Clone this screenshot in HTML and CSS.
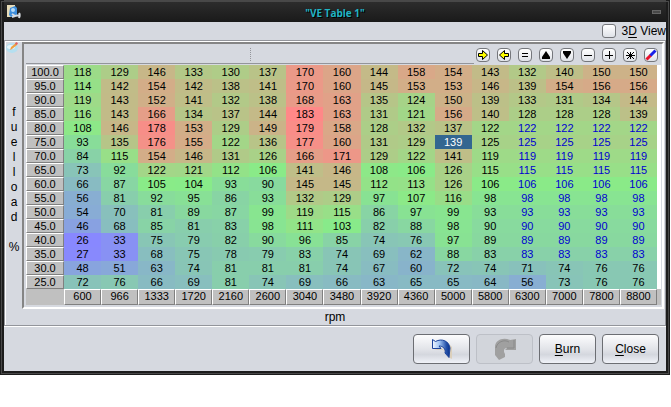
FILE: index.html
```
<!DOCTYPE html>
<html lang="en">
<head>
    <meta charset="UTF-8">
    <meta name="viewport" content="width=device-width, initial-scale=1.0">
    <title>VE Table 1</title>
    <link rel="stylesheet" href="styles.css">
</head>
<body>
    <div class="window">
        <header class="titlebar">
            <svg class="app-icon" width="16" height="16" viewBox="0 0 16 16">
                <path d="M1 1h8v10l-2 2H1z" fill="#e8dcb8"/>
                <path d="M4 4l5-2 2 2v8l-6 1-2-2z" fill="#3f8fdc"/>
                <circle cx="7" cy="6" r="2" fill="#b8dcf8"/>
                <path d="M6 10l3 2 5-1M13 9l1 2M13 14l1-3M6 13l3-1" stroke="#d8dde2" stroke-width="2" fill="none"/>
            </svg>
            <h1 class="title">"VE Table 1"</h1>
            <button class="minimize" aria-label="Minimize"></button>
        </header>

        <div class="options">
            <input type="checkbox" id="view3d">
            <label for="view3d">3<u>D</u> View</label>
        </div>

        <main class="panel">
            <div class="side">
                <svg width="13" height="12" viewBox="0 0 13 12">
                    <ellipse cx="6" cy="6" rx="6" ry="5" fill="#b5dff0"/>
                    <ellipse cx="5" cy="5" rx="4" ry="2" fill="#e6f5fb"/>
                    <path d="M4 8l1-3 5-4 1 2-5 4z" fill="#f0a040"/>
                    <path d="M10 0l2 1-1 2-2-1z" fill="#e06060"/>
                </svg>
                <div class="y-label">
                    <span>f</span>
                    <span>u</span>
                    <span>e</span>
                    <span>l</span>
                    <span>l</span>
                    <span>o</span>
                    <span>a</span>
                    <span>d</span>
                    <span></span>
                    <span>%</span>
                </div>
            </div>
            <div class="frame">
                <div class="toolbar">
                    <div class="status"><span></span><span></span></div>
                    <div class="tools">
                        <button aria-label="Shift right"><svg viewBox="0 0 14 14"><path d="M2.500 5.500h4v-3l5 4.500-5 4.500v-3h-4z" fill="#ff0" stroke="#000"/></svg></button>
                        <button aria-label="Shift left"><svg viewBox="0 0 14 14"><path d="M11.500 5.500h-4v-3l-5 4.500 5 4.500v-3h4z" fill="#ff0" stroke="#000"/></svg></button>
                        <button aria-label="Set value"><svg viewBox="0 0 14 14"><path d="M4 5.500h6M4 8.500h6" stroke="#000"/></svg></button>
                        <button aria-label="Increase"><svg viewBox="0 0 14 14"><path d="M7 3l4 6v2H3V9z"/></svg></button>
                        <button aria-label="Decrease"><svg viewBox="0 0 14 14"><path d="M3 3h8v2l-4 6-4-6z"/></svg></button>
                        <button aria-label="Subtract"><svg viewBox="0 0 14 14"><path d="M3 7.500h8" stroke="#000"/></svg></button>
                        <button aria-label="Add"><svg viewBox="0 0 14 14"><path d="M3 7.500h8M7.500 3v8" stroke="#000"/></svg></button>
                        <button aria-label="Multiply"><svg viewBox="0 0 14 14"><path d="M3 7.500h9M4 4l7 7M11 4l-7 7M7.500 4v7" stroke="#000"/></svg></button>
                        <button aria-label="Color cells"><svg viewBox="0 0 14 14"><path d="M2.500 11.500L7 7" stroke="#e8102c" stroke-width="3"/><path d="M6.500 7.500L11.500 2.500" stroke="#1820e8" stroke-width="3"/></svg></button>
                    </div>
                </div>
                <table id="ve-table">
                    <colgroup>
                        <col class="col-load">
                        <col span="16">
                        <col class="col-end">
                    </colgroup>
                    <tbody></tbody>
                    <tfoot></tfoot>
                </table>
            </div>
            <div class="x-label">rpm</div>
        </main>

        <footer class="actions">
            <button aria-label="Undo">
                <svg width="22" height="22" viewBox="0 0 22 22">
                    <defs>
                        <linearGradient id="blue">
                            <stop offset="0" stop-color="#f0f6ff"/>
                            <stop offset="0.4" stop-color="#a0c4f4"/>
                            <stop offset="0.8" stop-color="#2450a8"/>
                            <stop offset="1" stop-color="#083088"/>
                        </linearGradient>
                    </defs>
                    <path d="M3 12h9l4 3 1 4 4 2V9l-3-3-2 8-6-4z" fill="#dcd0bc"/>
                    <path d="M1.500 1.500l3 2C11 0 18 3 19 10l-1 9.500-4-4.500c1-4-2-7-6-7l2 2.500H1.500z" fill="url(#blue)" stroke="#1c449c"/>
                </svg>
            </button>
            <button aria-label="Redo" disabled>
                <svg width="22" height="22" viewBox="0 0 22 22">
                    <path d="M22 1v11H11l2-2c-3 0-4 3-2 6v3l-6 3-4-5V9C1 2 9-1 16 2z" fill="#a0a0a0"/>
                    <path d="M20 2v8h-7M2 10c1-6 8-9 13-6" stroke="#8a8a8a" fill="none"/>
                </svg>
            </button>
            <button><span><u>B</u>urn</span></button>
            <button><span><u>C</u>lose</span></button>
        </footer>
    </div>

    <script src="table.js"></script>
</body>
</html>
```
FILE: styles.css
```
body {
    margin: 0;
    background: #fff;
    font-family: "Liberation Sans", Arial, sans-serif;
    font-size: 12px;
    color: #000;
}

button {
    font-family: inherit;
    font-size: 12px;
    color: #000;
    padding: 0;
}

.window {
    box-sizing: border-box;
    margin-right: 1px;
    border: 4px solid #1c1c1c;
    border-top: 0;
    outline: 1px solid #484848;
    outline-offset: -2px;
    background: #d6d9e0;
}

.titlebar {
    display: grid;
    grid-template-columns: 20px 1fr 20px;
    align-items: center;
    height: 22px;
    background: linear-gradient(#484848 0, #484848 1px, #2c2c2c 2px, #1a1a1a);
}

.app-icon {
    margin: 2px 0 0 2px;
}

.title {
    margin: 3px 0 0;
    text-align: center;
    font-family: "Open Sans", "Noto Sans", sans-serif;
    font-size: 10px;
    font-weight: bold;
    line-height: 14px;
    color: #20b4c4;
    text-shadow: 1px 1px 0 #000;
}

.minimize {
    width: 9px;
    height: 4px;
    margin: 2px 0 0 6px;
    border: 1px solid #666;
    background: #484848;
}

.options {
    display: flex;
    justify-content: flex-end;
    align-items: center;
    gap: 6px;
    height: 18px;
}

.options input {
    appearance: none;
    box-sizing: border-box;
    width: 14px;
    height: 14px;
    margin: 0;
    border: 1px solid #75777c;
    border-radius: 3px;
    background: linear-gradient(#fff, #dfe2e8);
}

.panel {
    display: grid;
    grid-template-columns: 16px minmax(0, 1fr);
    border: 1px solid #93959b;
    box-shadow: inset 1px 1px 0 #fff, 0 1px 0 #fff;
    padding: 1px 1px 0;
}

.side svg {
    display: block;
}

.y-label {
    margin-top: 51px;
    text-align: center;
}

.y-label span {
    display: block;
    height: 15px;
    line-height: 15px;
}

.frame {
    border: 2px solid #fff;
    border-top-color: #858585;
    border-left-color: #858585;
    padding: 0 1px 2px 2px;
}

.toolbar {
    display: flex;
    height: 21px;
}

.status {
    display: flex;
    flex: 1;
    height: 19px;
    border-bottom: 1px solid #93959b;
}

.status span {
    flex: 1;
}

.status span:first-child {
    margin: 4px 0 2px;
    border-right: 1px dotted #93959b;
}

.tools {
    display: flex;
    gap: 7px;
    padding: 4px 3px 3px 2px;
}

.tools button {
    width: 14px;
    height: 14px;
    border: 1px solid #75777c;
    border-radius: 4px;
    background: linear-gradient(#fff, #dfe2e8);
    overflow: hidden;
}

.tools svg {
    display: block;
    width: 14px;
    height: 14px;
    margin: -1px;
}

table {
    width: 100%;
    table-layout: fixed;
    border-collapse: separate;
    border-spacing: 0;
    background: #fff;
}

.col-load {
    width: 38px;
}

.col-end {
    width: 4px;
}

th, td {
    box-sizing: border-box;
    height: 14px;
    padding: 0;
    font-size: 11px;
    font-weight: normal;
    line-height: 12px;
    text-align: center;
}

th {
    border: 1px solid #808080;
    border-top-color: #fff;
    border-left-color: #fff;
    background: #c0c0c0;
}

tfoot th {
    height: 16px;
    padding-bottom: 2px;
}

tfoot td {
    background: #c0c0c0;
}

.extrapolated {
    color: #0000d0;
}

.selected {
    color: #fff;
}

.x-label {
    grid-column: 1 / -1;
    padding-top: 1px;
    line-height: 15px;
    text-align: center;
}

.actions {
    display: flex;
    justify-content: flex-end;
    gap: 6px;
    padding: 8px 7px 7px;
}

.actions button {
    display: flex;
    align-items: center;
    justify-content: center;
    width: 57px;
    height: 30px;
    border: 1px solid #6c6e73;
    border-radius: 4px;
    background: linear-gradient(#fcfcfd, #e2e4e9 50%, #d4d7de 70%, #f0f2f8);
}

.actions button:disabled {
    border-color: #bdc0c7;
    background: #d2d5db;
}

u {
    text-underline-offset: 2px;
}
```
FILE: table.js
```
const rpm = [600, 966, 1333, 1720, 2160, 2600, 3040, 3480, 3920, 4360, 5000, 5800, 6300, 7000, 7800, 8800];
const rows = [
    ['100.0', 118, 129, 146, 133, 130, 137, 170, 160, 144, 158, 154, 143, 132, 140, 150, 150],
    ['95.0', 114, 142, 154, 142, 138, 141, 170, 160, 145, 153, 153, 146, 139, 154, 156, 156],
    ['90.0', 119, 143, 152, 141, 132, 138, 168, 163, 135, 124, 150, 139, 133, 131, 134, 144],
    ['85.0', 116, 143, 166, 134, 137, 144, 183, 163, 131, 121, 156, 140, 128, 128, 128, 139],
    ['80.0', 108, 146, 178, 153, 129, 149, 179, 158, 128, 132, 137, 122, 122, 122, 122, 122],
    ['75.0', 93, 135, 176, 155, 122, 136, 177, 160, 131, 129, 139, 125, 125, 125, 125, 125],
    ['70.0', 84, 115, 154, 146, 131, 126, 166, 171, 129, 122, 141, 119, 119, 119, 119, 119],
    ['65.0', 73, 92, 122, 121, 112, 106, 141, 146, 108, 106, 126, 115, 115, 115, 115, 115],
    ['60.0', 66, 87, 105, 104, 93, 90, 145, 145, 112, 113, 126, 106, 106, 106, 106, 106],
    ['55.0', 56, 81, 92, 95, 86, 93, 132, 129, 97, 107, 116, 98, 98, 98, 98, 98],
    ['50.0', 54, 70, 81, 89, 87, 99, 119, 115, 86, 97, 99, 93, 93, 93, 93, 93],
    ['45.0', 46, 68, 85, 81, 83, 98, 111, 103, 82, 88, 98, 90, 90, 90, 90, 90],
    ['40.0', 26, 33, 75, 79, 82, 90, 96, 85, 74, 76, 97, 89, 89, 89, 89, 89],
    ['35.0', 27, 33, 68, 75, 78, 79, 83, 74, 69, 62, 88, 83, 83, 83, 83, 83],
    ['30.0', 48, 51, 63, 74, 81, 81, 81, 74, 67, 60, 72, 74, 71, 74, 76, 76],
    ['25.0', 72, 76, 66, 69, 81, 74, 69, 66, 63, 65, 65, 64, 56, 73, 76, 76]
];

const min = 26;
const max = 183;
const mid = (min + max) / 2;

// blue (low) -> green (middle) -> red (high)
function cellColor(value) {
    const t = Math.abs(value - mid) / (max - mid);
    const green = Math.round(236 - t * 100);
    const strong = Math.round(136 + t * 119);
    return value < mid ? `rgb(136, ${green}, ${strong})` : `rgb(${strong}, ${green}, 136)`;
}

const body = document.querySelector('#ve-table tbody');
rows.forEach(function(row, r) {
    const tr = body.insertRow();
    const th = document.createElement('th');
    th.scope = 'row';
    th.textContent = row[0];
    tr.appendChild(th);
    row.slice(1).forEach(function(value, c) {
        const td = tr.insertCell();
        td.textContent = value;
        td.style.backgroundColor = cellColor(value);
        if (r === 5 && c === 10) {
            td.className = 'selected';
            td.style.backgroundColor = '#336690';
        } else if (r >= 4 && r <= 13 && c >= 12) {
            td.className = 'extrapolated';
        }
    });
    tr.insertCell();
});

const foot = document.querySelector('#ve-table tfoot').insertRow();
foot.insertCell();
rpm.forEach(function(value) {
    const th = document.createElement('th');
    th.scope = 'col';
    th.textContent = value;
    foot.appendChild(th);
});
foot.insertCell();
```
